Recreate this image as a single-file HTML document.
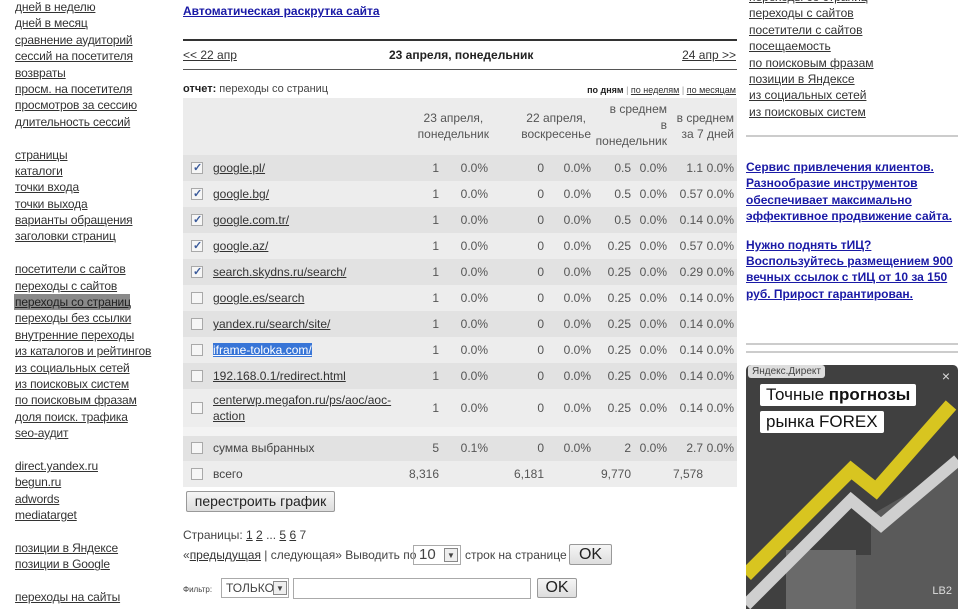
<!DOCTYPE html>
<html><head><meta charset="utf-8">
<style>
*{margin:0;padding:0;box-sizing:border-box}
body{width:960px;height:609px;overflow:hidden;background:#fff;font-family:"Liberation Sans",Arial,sans-serif;font-size:12px;color:#444;position:relative}
a{color:#333;text-decoration:underline}
.menu{position:absolute;left:15px;top:-1px;line-height:16.4px;font-size:12px;letter-spacing:-0.15px}
.menu div{height:16.4px;white-space:nowrap}
.menu .sel{background:#8a8a8a;color:#fff;width:116px;margin-left:-1px;padding-left:1px}
.menu .sel a{color:#222}
.rmenu{position:absolute;left:749px;top:-11px;line-height:16.4px}
.rmenu div{height:16.4px}
.blue{color:#1a1aa6;font-weight:bold}
.hr{position:absolute;height:2px;background:#333}
.row{position:absolute;left:183px;width:554px;height:26px;line-height:26px}
.d{background:#e2e2e2}.l{background:#ededed}
.cb{position:absolute;left:8px;top:7px;width:12px;height:12px;border:1px solid #a9a9a9;background:#f6f6f6}
.cb.c::after{content:"✓";position:absolute;left:1px;top:-8px;font-size:11px;color:#3a5a9a;font-weight:bold}
.nm{position:absolute;left:30px}
.n{position:absolute;text-align:right;color:#555}
.sel2{background:#3875d7;color:#fff}
.btn{position:absolute;border:1px solid #999;border-radius:2px;background:linear-gradient(#f6f6f6,#ddd);font-size:14px;color:#222;text-align:center}
</style></head><body>

<div class="menu">
<div><a>дней в неделю</a></div><div><a>дней в месяц</a></div><div><a>сравнение аудиторий</a></div><div><a>сессий на посетителя</a></div><div><a>возвраты</a></div><div><a>просм. на посетителя</a></div><div><a>просмотров за сессию</a></div><div><a>длительность сессий</a></div><div></div>
<div><a>страницы</a></div><div><a>каталоги</a></div><div><a>точки входа</a></div><div><a>точки выхода</a></div><div><a>варианты обращения</a></div><div><a>заголовки страниц</a></div><div></div>
<div><a>посетители с сайтов</a></div><div><a>переходы с сайтов</a></div><div class="sel"><a>переходы со страниц</a></div><div><a>переходы без ссылки</a></div><div><a>внутренние переходы</a></div><div><a>из каталогов и рейтингов</a></div><div><a>из социальных сетей</a></div><div><a>из поисковых систем</a></div><div><a>по поисковым фразам</a></div><div><a>доля поиск. трафика</a></div><div><a>seo-аудит</a></div><div></div>
<div><a>direct.yandex.ru</a></div><div><a>begun.ru</a></div><div><a>adwords</a></div><div><a>mediatarget</a></div><div></div>
<div><a>позиции в Яндексе</a></div><div><a>позиции в Google</a></div><div></div>
<div><a>переходы на сайты</a></div>
</div>

<a class="blue" style="position:absolute;left:183px;top:4px">Автоматическая раскрутка сайта</a>
<div class="hr" style="left:183px;top:39px;width:554px"></div>
<div class="hr" style="left:183px;top:69px;width:554px;height:1px;background:#555"></div>
<a style="position:absolute;left:183px;top:48px">&lt;&lt; 22 апр</a>
<b style="position:absolute;left:389px;top:48px;color:#222">23 апреля, понедельник</b>
<a style="position:absolute;right:224px;top:48px">24 апр &gt;&gt;</a>
<div style="position:absolute;left:183px;top:83px;font-size:11px"><b style="color:#222">отчет:</b> переходы со страниц</div>
<div style="position:absolute;right:224px;top:85px;font-size:9px;color:#999"><b style="color:#222">по дням</b> | <a>по неделям</a> | <a>по месяцам</a></div>

<div style="position:absolute;left:183px;top:98px;width:554px;height:57px;background:#ececec;font-size:12px;color:#555;line-height:16px">
<div class="n" style="right:248px;top:12px;text-align:center">23 апреля,<br>понедельник</div>
<div class="n" style="right:146px;top:12px;text-align:center">22 апреля,<br>воскресенье</div>
<div class="n" style="right:70px;top:3px">в среднем<br>в<br>понедельник</div>
<div class="n" style="right:3px;top:12px">в среднем<br>за 7 дней</div>
</div>

<div class="row d" style="top:155px"><span class="cb c"></span><a class="nm">google.pl/</a><span class="n" style="right:298px">1</span><span class="n" style="right:249px">0.0%</span><span class="n" style="right:193px">0</span><span class="n" style="right:146px">0.0%</span><span class="n" style="right:106px">0.5</span><span class="n" style="right:70px">0.0%</span><span class="n" style="right:34px">1.1</span><span class="n" style="right:3px">0.0%</span></div>
<div class="row l" style="top:181px"><span class="cb c"></span><a class="nm">google.bg/</a><span class="n" style="right:298px">1</span><span class="n" style="right:249px">0.0%</span><span class="n" style="right:193px">0</span><span class="n" style="right:146px">0.0%</span><span class="n" style="right:106px">0.5</span><span class="n" style="right:70px">0.0%</span><span class="n" style="right:34px">0.57</span><span class="n" style="right:3px">0.0%</span></div>
<div class="row d" style="top:207px"><span class="cb c"></span><a class="nm">google.com.tr/</a><span class="n" style="right:298px">1</span><span class="n" style="right:249px">0.0%</span><span class="n" style="right:193px">0</span><span class="n" style="right:146px">0.0%</span><span class="n" style="right:106px">0.5</span><span class="n" style="right:70px">0.0%</span><span class="n" style="right:34px">0.14</span><span class="n" style="right:3px">0.0%</span></div>
<div class="row l" style="top:233px"><span class="cb c"></span><a class="nm">google.az/</a><span class="n" style="right:298px">1</span><span class="n" style="right:249px">0.0%</span><span class="n" style="right:193px">0</span><span class="n" style="right:146px">0.0%</span><span class="n" style="right:106px">0.25</span><span class="n" style="right:70px">0.0%</span><span class="n" style="right:34px">0.57</span><span class="n" style="right:3px">0.0%</span></div>
<div class="row d" style="top:259px"><span class="cb c"></span><a class="nm">search.skydns.ru/search/</a><span class="n" style="right:298px">1</span><span class="n" style="right:249px">0.0%</span><span class="n" style="right:193px">0</span><span class="n" style="right:146px">0.0%</span><span class="n" style="right:106px">0.25</span><span class="n" style="right:70px">0.0%</span><span class="n" style="right:34px">0.29</span><span class="n" style="right:3px">0.0%</span></div>
<div class="row l" style="top:285px"><span class="cb"></span><a class="nm">google.es/search</a><span class="n" style="right:298px">1</span><span class="n" style="right:249px">0.0%</span><span class="n" style="right:193px">0</span><span class="n" style="right:146px">0.0%</span><span class="n" style="right:106px">0.25</span><span class="n" style="right:70px">0.0%</span><span class="n" style="right:34px">0.14</span><span class="n" style="right:3px">0.0%</span></div>
<div class="row d" style="top:311px"><span class="cb"></span><a class="nm">yandex.ru/search/site/</a><span class="n" style="right:298px">1</span><span class="n" style="right:249px">0.0%</span><span class="n" style="right:193px">0</span><span class="n" style="right:146px">0.0%</span><span class="n" style="right:106px">0.25</span><span class="n" style="right:70px">0.0%</span><span class="n" style="right:34px">0.14</span><span class="n" style="right:3px">0.0%</span></div>
<div class="row l" style="top:337px"><span class="cb"></span><a class="nm sel2" style="line-height:14px;top:6px">iframe-toloka.com/</a><span class="n" style="right:298px">1</span><span class="n" style="right:249px">0.0%</span><span class="n" style="right:193px">0</span><span class="n" style="right:146px">0.0%</span><span class="n" style="right:106px">0.25</span><span class="n" style="right:70px">0.0%</span><span class="n" style="right:34px">0.14</span><span class="n" style="right:3px">0.0%</span></div>
<div class="row d" style="top:363px"><span class="cb"></span><a class="nm">192.168.0.1/redirect.html</a><span class="n" style="right:298px">1</span><span class="n" style="right:249px">0.0%</span><span class="n" style="right:193px">0</span><span class="n" style="right:146px">0.0%</span><span class="n" style="right:106px">0.25</span><span class="n" style="right:70px">0.0%</span><span class="n" style="right:34px">0.14</span><span class="n" style="right:3px">0.0%</span></div>
<div class="row l" style="top:389px;height:38px;line-height:38px"><span class="cb" style="top:13px"></span><a class="nm" style="line-height:16px;top:3px">centerwp.megafon.ru/ps/aoc/aoc-<br>action</a><span class="n" style="right:298px">1</span><span class="n" style="right:249px">0.0%</span><span class="n" style="right:193px">0</span><span class="n" style="right:146px">0.0%</span><span class="n" style="right:106px">0.25</span><span class="n" style="right:70px">0.0%</span><span class="n" style="right:34px">0.14</span><span class="n" style="right:3px">0.0%</span></div>
<div class="row" style="top:427px;height:9px;background:#f3f3f3"></div>
<div class="row d" style="top:436px;height:25px;line-height:25px"><span class="cb" style="top:6px"></span><span class="nm">сумма выбранных</span><span class="n" style="right:298px">5</span><span class="n" style="right:249px">0.1%</span><span class="n" style="right:193px">0</span><span class="n" style="right:146px">0.0%</span><span class="n" style="right:106px">2</span><span class="n" style="right:70px">0.0%</span><span class="n" style="right:34px">2.7</span><span class="n" style="right:3px">0.0%</span></div>
<div class="row l" style="top:461px"><span class="cb"></span><span class="nm">всего</span><span class="n" style="right:298px">8,316</span><span class="n" style="right:193px">6,181</span><span class="n" style="right:106px">9,770</span><span class="n" style="right:34px">7,578</span></div>

<div class="btn" style="left:186px;top:491px;width:149px;height:21px;line-height:19px">перестроить график</div>
<div style="position:absolute;left:183px;top:528px">Страницы: <a>1</a> <a>2</a> ... <a>5</a> <a>6</a> 7</div>
<div style="position:absolute;left:183px;top:548px">«<a>предыдущая</a> | следующая» Выводить по</div>
<div style="position:absolute;left:413px;top:545px;width:48px;height:20px;border:1px solid #aaa;font-size:15px;line-height:18px;padding-left:5px">10<span style="position:absolute;right:2px;top:2px;width:14px;height:14px;border:1px solid #888;background:#eee;font-size:8px;line-height:13px;text-align:center">▼</span></div>
<div style="position:absolute;left:465px;top:548px">строк на странице</div>
<div class="btn" style="left:569px;top:544px;width:43px;height:21px;line-height:19px;font-size:16px">OK</div>
<div style="position:absolute;left:183px;top:585px;font-size:8px">Фильтр:</div>
<div style="position:absolute;left:221px;top:578px;width:68px;height:20px;border:1px solid #aaa;font-size:12px;line-height:18px;padding-left:4px">ТОЛЬКО<span style="position:absolute;right:1px;top:2px;width:14px;height:14px;border:1px solid #888;background:#eee;font-size:8px;line-height:13px;text-align:center">▼</span></div>
<div style="position:absolute;left:293px;top:578px;width:238px;height:21px;border:1px solid #aaa"></div>
<div class="btn" style="left:537px;top:578px;width:40px;height:20px;line-height:18px;font-size:16px">OK</div>

<div class="rmenu">
<div><a>переходы со страниц</a></div><div><a>переходы с сайтов</a></div><div><a>посетители с сайтов</a></div><div><a>посещаемость</a></div><div><a>по поисковым фразам</a></div><div><a>позиции в Яндексе</a></div><div><a>из социальных сетей</a></div><div><a>из поисковых систем</a></div>
</div>
<div style="position:absolute;left:746px;top:135px;width:212px;height:2px;background:#ccc"></div>
<div style="position:absolute;left:746px;top:159px;line-height:16.4px;font-size:12px">
<a class="blue">Сервис привлечения клиентов.<br>Разнообразие инструментов<br>обеспечивает максимально<br>эффективное продвижение сайта.</a>
<div style="height:12px"></div>
<a class="blue">Нужно поднять тИЦ?<br>Воспользуйтесь размещением 900<br>вечных ссылок с тИЦ от 10 за 150<br>руб. Прирост гарантирован.</a>
</div>
<div style="position:absolute;left:746px;top:343px;width:212px;height:2px;background:#ccc"></div>
<div style="position:absolute;left:746px;top:351px;width:212px;height:2px;background:#ccc"></div>

<div style="position:absolute;left:746px;top:365px;width:212px;height:244px;background:#404040;border-radius:5px 5px 0 0;overflow:hidden">
<svg width="212" height="244" style="position:absolute;left:0;top:0">
<polygon points="125,150 212,100 212,244 60,244 60,190 125,190" fill="#5a5a5a"/>
<rect x="40" y="185" width="70" height="59" fill="#6a6a6a"/>
<polyline points="0,210 105,105 130,125 205,40" fill="none" stroke="#d8c520" stroke-width="14"/>
<polyline points="0,240 105,135 135,160 212,95" fill="none" stroke="#cfcfcf" stroke-width="12"/>
</svg>
<div style="position:absolute;left:2px;top:0;background:#ddd;color:#444;font-size:10px;padding:1px 4px;border-radius:3px">Яндекс.Директ</div>
<div style="position:absolute;right:8px;top:3px;color:#ddd;font-size:14px">×</div>
<div style="position:absolute;left:14px;top:19px;background:#fff;color:#111;font-size:17px;padding:1px 6px;border-radius:2px">Точные <b>прогнозы</b></div>
<div style="position:absolute;left:14px;top:46px;background:#fff;color:#111;font-size:17px;padding:1px 6px;border-radius:2px">рынка FOREX</div>
<div style="position:absolute;right:6px;top:220px;color:#ddd;font-size:11px">LB2</div>
</div>
</body></html>
